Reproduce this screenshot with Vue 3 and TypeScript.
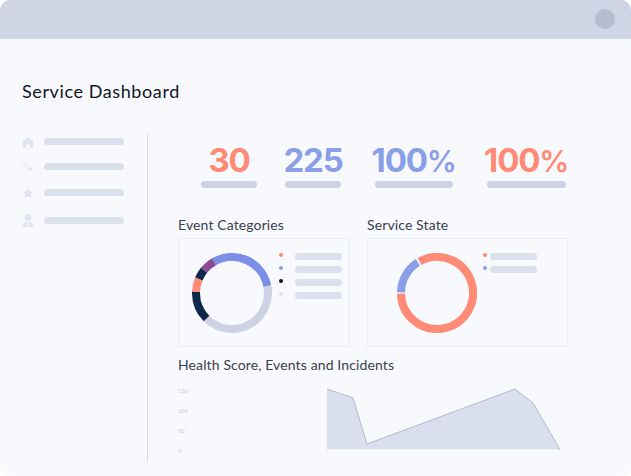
<script setup lang="ts">
interface Seg { from: number; to: number; color: string }
const polar = (a: number, r: number) => {
  const t = ((a - 90) * Math.PI) / 180
  return `${(40 + r * Math.cos(t)).toFixed(2)} ${(40 + r * Math.sin(t)).toFixed(2)}`
}
const arc = (s: Seg) =>
  `M${polar(s.from, 36)} A36 36 0 ${s.to - s.from > 180 ? 1 : 0} 1 ${polar(s.to, 36)}`

const coral = '#ff8a75'
const blue = '#8a9fe8'
const navy = '#0f2748'
const stats = [
  { value: '30', unit: '', color: coral, bar: 56, gap: 28 },
  { value: '225', unit: '', color: blue, bar: 56, gap: 34 },
  { value: '100', unit: '%', color: blue, bar: 78, gap: 34 },
  { value: '100', unit: '%', color: coral, bar: 79, gap: 0 }
]
const nav = [
  { id: 'home', after: 10 },
  { id: 'key', after: 11 },
  { id: 'star', after: 13 },
  { id: 'user', after: 0 }
]
const eventSegs: Seg[] = [
  { from: -30, to: 79, color: '#7c8fe6' },
  { from: 79, to: 225, color: '#cdd3e4' },
  { from: 225, to: 272, color: navy },
  { from: 272, to: 293, color: coral },
  { from: 293, to: 309, color: navy },
  { from: 309, to: 330, color: '#8a4a96' }
]
const eventDots = [coral, blue, '#0a1020', '#dfe2ea']
const stateSegs: Seg[] = [
  { from: -29, to: 269, color: coral },
  { from: 271, to: 328, color: blue }
]
const stateDots = [coral, blue]
const axis = ['150', '100', '50', '0']
const area = '0,4 26,13 40,59 188,4 206,18 233,64.5 0,64.5'
</script>

<template>
  <div class="window">
    <header class="titlebar"><span class="avatar"></span></header>
    <h1 class="page-title">Service Dashboard</h1>
    <div class="main">
      <aside class="sidebar">
        <div v-for="item in nav" :key="item.id" class="nav-row" :style="{ marginBottom: item.after + 'px' }">
          <svg class="nav-icon" viewBox="0 0 12 14" width="12" height="14">
            <path v-if="item.id === 'home'" d="M6 2 L11 6 V13 H8 V9.5 H4 V13 H1 V6 Z" />
            <g v-else-if="item.id === 'key'">
              <circle cx="3.6" cy="5" r="1.9" fill="none" stroke="#dfe4ef" stroke-width="1" />
              <path d="M5 6.3 L7 8" stroke="#dfe4ef" stroke-width="1" />
              <circle cx="8.2" cy="9" r="1.8" />
            </g>
            <path v-else-if="item.id === 'star'" d="M6 1.5 L7.6 5.3 L11.7 5.6 L8.6 8.2 L9.6 12.3 L6 10 L2.4 12.3 L3.4 8.2 L.3 5.6 L4.4 5.3 Z" />
            <g v-else>
              <circle cx="6" cy="3.5" r="3.4" />
              <path d="M.6 13 C.6 9.5 2.5 8 5.6 7.8 V13 Z M6.4 7.8 C9.5 8 11.4 9.5 11.4 13 H6.4 Z" />
            </g>
          </svg>
          <span class="nav-bar"></span>
        </div>
      </aside>
      <section class="content">
        <div class="stats">
          <div
            v-for="(s, i) in stats"
            :key="i"
            class="stat"
            :style="{ width: s.bar + 'px', marginRight: s.gap + 'px' }"
          >
            <span class="stat-value" :style="{ color: s.color }">{{ s.value }}<small v-if="s.unit" class="stat-unit">{{ s.unit }}</small></span>
            <span class="stat-bar"></span>
          </div>
        </div>
        <div class="panels">
          <div class="panel">
            <h2 class="heading">Event Categories</h2>
            <div class="card card-events">
              <svg class="donut" viewBox="0 0 80 80" width="80" height="80">
                <path v-for="(s, i) in eventSegs" :key="i" :d="arc(s)" :stroke="s.color" fill="none" stroke-width="8" />
              </svg>
              <ul class="legend">
                <li v-for="c in eventDots" :key="c" class="legend-row">
                  <i class="dot" :style="{ background: c }"></i><span class="legend-bar"></span>
                </li>
              </ul>
            </div>
          </div>
          <div class="panel">
            <h2 class="heading">Service State</h2>
            <div class="card card-state">
              <svg class="donut" viewBox="0 0 80 80" width="80" height="80">
                <path v-for="(s, i) in stateSegs" :key="i" :d="arc(s)" :stroke="s.color" fill="none" stroke-width="8" />
              </svg>
              <ul class="legend">
                <li v-for="c in stateDots" :key="c" class="legend-row">
                  <i class="dot" :style="{ background: c }"></i><span class="legend-bar"></span>
                </li>
              </ul>
            </div>
          </div>
        </div>
        <h2 class="heading chart-heading">Health Score, Events and Incidents</h2>
        <div class="chart">
          <div class="axis"><span v-for="a in axis" :key="a">{{ a }}</span></div>
          <svg class="plot" viewBox="0 0 240 66" width="240" height="66">
            <polygon :points="area" fill="#d9dfec" />
            <polyline points="0,4 26,13 40,59 188,4 206,18 233,64.5" fill="none" stroke="#b3bacc" stroke-width="1" />
          </svg>
        </div>
      </section>
    </div>
  </div>
</template>

<style>
html, body { margin: 0; background: #fff; }
</style>

<style scoped>
.window {
  width: 631px;
  height: 476px;
  background: #f7f9fd;
  border-radius: 10px;
  overflow: hidden;
  font-family: Lato, "Liberation Sans", sans-serif;
}
.titlebar {
  height: 38.5px;
  background: #cfd5e5;
  display: flex;
  align-items: center;
  justify-content: flex-end;
  padding-right: 16px;
  box-sizing: border-box;
}
.avatar { width: 20px; height: 20px; border-radius: 50%; background: #b5bccd; }
.page-title {
  margin: 41.5px 0 32px 22px;
  height: 22px;
  line-height: 22px;
  font-size: 18px;
  font-weight: 400;
  letter-spacing: .6px;
  color: #12161f;
}
.main { display: flex; height: 328px; }
.sidebar {
  box-sizing: border-box;
  border-right: 1px solid #d8dce8;
  padding-left: 22px;
  flex: none;
  width: 148px;
}
.nav-row { display: flex; align-items: center; height: 15px; gap: 10px; }
.nav-icon { fill: #dfe4ef; flex: none; }
.nav-bar { width: 80px; height: 7px; border-radius: 3.5px; background: #dae0ec; }
.content { padding: 6px 0 0 30px; }
.stats { display: flex; margin-left: 23px; margin-bottom: 27px; }
.stat { display: flex; flex-direction: column; align-items: center; }
.stat-value {
  display: block;
  height: 40px;
  font-family: Inter, Lato, sans-serif;
  font-size: 33px;
  line-height: 40px;
  font-weight: 700;
  letter-spacing: -1.2px;
  white-space: nowrap;
}
.stat-unit { font-size: 30px; font-weight: 600; letter-spacing: -.5px; line-height: 1; }
.stat-bar { display: block; width: 100%; height: 7px; margin-top: 1px; border-radius: 3.5px; background: #cdd3e4; flex: none; }
.panels { display: flex; gap: 17px; }
.heading {
  margin: 0 0 3px;
  height: 20px;
  line-height: 19px;
  font-size: 14px;
  font-weight: 400;
  letter-spacing: .12px;
  color: #3a404d;
  white-space: nowrap;
}
.card {
  display: flex;
  height: 109px;
  box-sizing: border-box;
  border: 1px solid #e8edf8;
  padding-top: 14px;
}
.card-events { width: 172px; padding-left: 13px; }
.card-state { width: 201px; padding-left: 29px; }
.donut { flex: none; }
.legend { list-style: none; margin: 0 0 0 7px; padding: 0; display: flex; flex-direction: column; gap: 6px; }
.card-state .legend { margin-left: 6px; }
.legend-row { display: flex; height: 7px; gap: 12px; }
.card-state .legend-row { gap: 3px; }
.dot { width: 4px; height: 4px; border-radius: 50%; flex: none; }
.legend-bar { width: 47px; height: 7px; border-radius: 3.5px; background: #dae0ec; }
.chart-heading { margin-top: 8px; margin-bottom: 6px; }
.chart { display: flex; }
.axis { width: 149px; display: flex; flex-direction: column; flex: none; }
.axis span { height: 20px; line-height: 20px; font-size: 5.5px; color: #c4c9d4; }
.plot { margin-top: 4px; flex: none; }
</style>
